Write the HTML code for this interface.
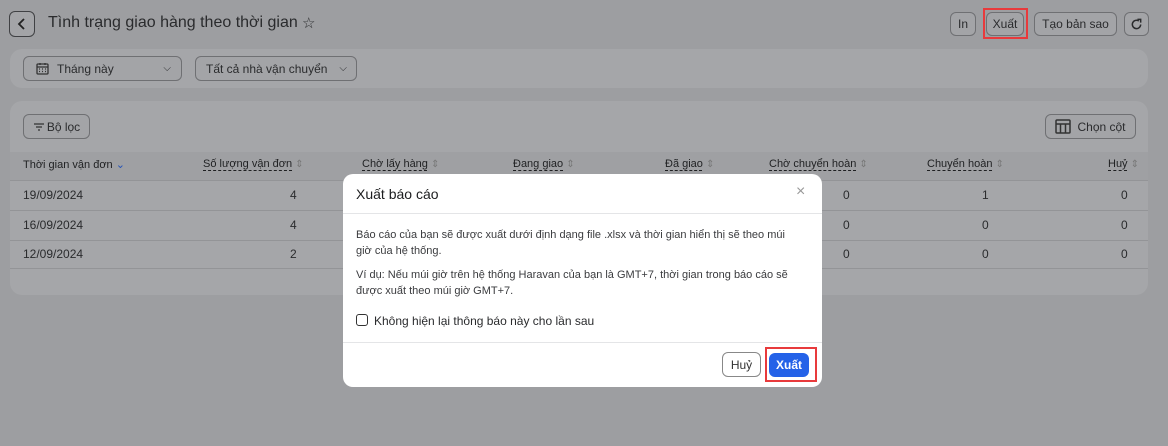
<!DOCTYPE html>
<html><head><meta charset="utf-8"><style>
*{box-sizing:border-box;margin:0;padding:0}
body{width:1168px;height:446px;background:#9d9ea1;font-family:"Liberation Sans",sans-serif;position:relative;overflow:hidden;color:#1c1d1f}
.abs{position:absolute}
.btn{position:absolute;border:1px solid #6f7073;border-radius:6px;background:#a3a4a7;font-size:12px;color:#2a2b2d;display:flex;align-items:center;justify-content:center}
.card{position:absolute;background:#a5a6a9;border-radius:12px}
.th{position:absolute;top:158px;font-size:11px;color:#1f2022}
.th u{text-decoration:underline dashed;text-underline-offset:3px}
.th span.s{color:#777;font-size:10px}
.td{position:absolute;font-size:12px;color:#2a2b2d}
.row{position:absolute;left:10px;width:1138px;height:1px;background:#939497}
</style></head><body>
<div class="btn" style="left:9px;top:11px;width:26px;height:26px;border-color:#404144"><svg width="12" height="14" viewBox="0 0 12 14"><path d="M8 2L3 7l5 5" stroke="#222" stroke-width="1.8" fill="none"/></svg></div>
<div class="abs" style="left:48px;top:14px;font-size:16px;color:#2a2b2d">Tình trạng giao hàng theo thời gian</div>
<div class="abs" style="left:302px;top:14px;font-size:15px;color:#2a2b2d">☆</div>
<div class="btn" style="left:950px;top:12px;width:26px;height:24px">In</div>
<div class="btn" style="left:986px;top:12px;width:38px;height:24px">Xuất</div>
<div class="abs" style="left:983px;top:8px;width:45px;height:31px;border:2px solid #e83a3c"></div>
<div class="btn" style="left:1034px;top:12px;width:83px;height:24px">Tạo bản sao</div>
<div class="btn" style="left:1124px;top:12px;width:25px;height:24px"><svg width="13" height="13" viewBox="0 0 14 14"><path d="M11.5 7A4.5 4.5 0 1 1 9.5 3.2" stroke="#2a2b2d" stroke-width="1.6" fill="none"/><path d="M8 1.5h3.5V5" stroke="#2a2b2d" stroke-width="1.6" fill="none"/></svg></div>
<div class="card" style="left:10px;top:49px;width:1138px;height:39px"></div>
<div class="btn" style="left:23px;top:56px;width:159px;height:25px;justify-content:flex-start;padding-left:12px;font-size:12px"><svg width="13" height="13" viewBox="0 0 13 13" style="margin-right:8px"><rect x="1" y="2" width="11" height="10" rx="1" stroke="#333" stroke-width="1.3" fill="none"/><path d="M1 5h11M4 1v2M9 1v2" stroke="#333" stroke-width="1.3"/><path d="M3 7h1M6 7h1M9 7h1M3 9.5h1M6 9.5h1M9 9.5h1" stroke="#333" stroke-width="1.2"/></svg>Tháng này<span style="position:absolute;right:10px;font-size:10px">⌵</span></div>
<div class="btn" style="left:195px;top:56px;width:162px;height:25px;justify-content:flex-start;padding-left:10px;font-size:12px">Tất cả nhà vận chuyển<span style="position:absolute;right:9px;font-size:10px">⌵</span></div>
<div class="card" style="left:10px;top:101px;width:1138px;height:194px"></div>
<div class="btn" style="left:23px;top:114px;width:67px;height:25px;font-size:12px"><svg width="12" height="10" viewBox="0 0 12 10" style="margin-right:2px"><path d="M1 2h10M3 5h6M5 8h2" stroke="#333" stroke-width="1.3"/></svg>Bộ lọc</div>
<div class="btn" style="left:1045px;top:114px;width:91px;height:25px;font-size:12px"><svg width="16" height="15" viewBox="0 0 16 15" style="margin-right:6px"><rect x="1" y="1" width="14" height="13" rx="1" stroke="#333" stroke-width="1.5" fill="none"/><path d="M1 5h14M5.5 5v9M10.5 5v9" stroke="#333" stroke-width="1.5"/></svg>Chọn cột</div>
<div class="abs" style="left:10px;top:152px;width:1138px;height:28px;background:#9fa0a3"></div>
<div class="th" style="left:23px">Thời gian vận đơn <span style="color:#2553b8">⌄</span></div>
<div class="th" style="left:203px"><u>Số lượng vận đơn</u> <span class="s">⇕</span></div>
<div class="th" style="left:362px"><u>Chờ lấy hàng</u> <span class="s">⇕</span></div>
<div class="th" style="left:513px"><u>Đang giao</u> <span class="s">⇕</span></div>
<div class="th" style="left:665px"><u>Đã giao</u> <span class="s">⇕</span></div>
<div class="th" style="left:769px"><u>Chờ chuyển hoàn</u> <span class="s">⇕</span></div>
<div class="th" style="left:927px"><u>Chuyển hoàn</u> <span class="s">⇕</span></div>
<div class="th" style="left:1108px"><u>Huỷ</u> <span class="s">⇕</span></div>
<div class="row" style="top:180px"></div><div class="row" style="top:210px"></div><div class="row" style="top:240px"></div><div class="row" style="top:268px"></div>
<div class="td" style="left:23px;top:188px">19/09/2024</div><div class="td" style="left:290px;top:188px">4</div><div class="td" style="left:843px;top:188px">0</div><div class="td" style="left:982px;top:188px">1</div><div class="td" style="left:1121px;top:188px">0</div>
<div class="td" style="left:23px;top:218px">16/09/2024</div><div class="td" style="left:290px;top:218px">4</div><div class="td" style="left:843px;top:218px">0</div><div class="td" style="left:982px;top:218px">0</div><div class="td" style="left:1121px;top:218px">0</div>
<div class="td" style="left:23px;top:247px">12/09/2024</div><div class="td" style="left:290px;top:247px">2</div><div class="td" style="left:843px;top:247px">0</div><div class="td" style="left:982px;top:247px">0</div><div class="td" style="left:1121px;top:247px">0</div>
<div class="abs" style="left:343px;top:174px;width:479px;height:213px;background:#fff;border-radius:10px">
<div class="abs" style="left:13px;top:12px;font-size:14px;color:#1c1d1f">Xuất báo cáo</div>
<div class="abs" style="left:453px;top:9px;font-size:16px;color:#999">×</div>
<div class="abs" style="left:0;top:39px;width:479px;height:1px;background:#e4e5e7"></div>
<div class="abs" style="left:13px;top:53px;width:440px;font-size:11px;line-height:16px;color:#3a3b3e">Báo cáo của bạn sẽ được xuất dưới định dạng file .xlsx và thời gian hiển thị sẽ theo múi giờ của hệ thống.</div>
<div class="abs" style="left:13px;top:93px;width:460px;font-size:11px;line-height:16px;color:#3a3b3e">Ví dụ: Nếu múi giờ trên hệ thống Haravan của bạn là GMT+7, thời gian trong báo cáo sẽ được xuất theo múi giờ GMT+7.</div>
<div class="abs" style="left:13px;top:140px;width:12px;height:12px;border:1.5px solid #333;border-radius:3px"></div>
<div class="abs" style="left:31px;top:140px;font-size:12px;color:#2a2b2d">Không hiện lại thông báo này cho lần sau</div>
<div class="abs" style="left:0;top:168px;width:479px;height:1px;background:#e4e5e7"></div>
<div class="abs" style="left:379px;top:178px;width:39px;height:25px;border:1px solid #888;border-radius:6px;font-size:12px;display:flex;align-items:center;justify-content:center;color:#333">Huỷ</div>
<div class="abs" style="left:426px;top:179px;width:40px;height:24px;background:#2462e8;border-radius:6px;font-size:12px;font-weight:bold;color:#fff;display:flex;align-items:center;justify-content:center">Xuất</div>
<div class="abs" style="left:422px;top:173px;width:52px;height:35px;border:2px solid #e83a3c"></div>
</div>
</body></html>
